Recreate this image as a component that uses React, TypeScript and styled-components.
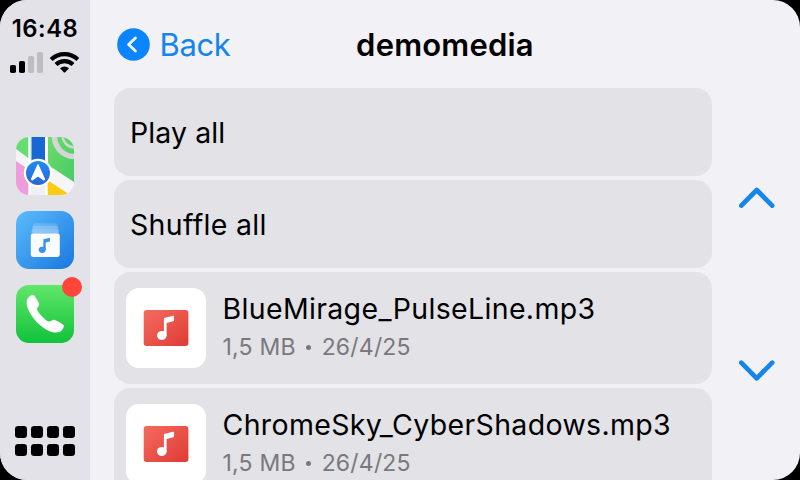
import React from "react";
import styled, { createGlobalStyle } from "styled-components";

const GlobalStyle = createGlobalStyle`
  * { box-sizing: border-box; }
  body { margin: 0; background: #000; overflow: hidden; }
`;

const Screen = styled.div`
  display: flex;
  width: 800px;
  height: 480px;
  overflow: hidden;
  border-radius: 27px;
  background: #f1f1f6;
  color: #000;
  font-family: "Inter", sans-serif;
`;

const Sidebar = styled.aside`
  display: flex;
  flex-direction: column;
  align-items: center;
  width: 90px;
  height: 480px;
  padding-top: 15px;
  background: #e2e2e8;
`;

const Clock = styled.div`
  height: 28px;
  line-height: 28px;
  font-size: 23.8px;
  font-weight: 600;
  letter-spacing: 0.5px;
  white-space: nowrap;
`;

const StatusIcons = styled.svg`
  display: block;
  width: 90px;
  height: 30px;
`;

const Dock = styled.nav`
  display: flex;
  flex-direction: column;
  gap: 16px;
  margin-top: 64px;
`;

const AppButton = styled.div`
  position: relative;
  width: 58px;
  height: 58px;
`;

const AppArt = styled.svg`
  display: block;
  width: 58px;
  height: 58px;
  border-radius: 13px;
`;

const Badge = styled.span`
  position: absolute;
  top: -8px;
  right: -8px;
  width: 20px;
  height: 20px;
  border-radius: 50%;
  background: #ff463b;
`;

const LauncherGrid = styled.div`
  display: grid;
  grid-template-columns: repeat(4, 12px);
  grid-auto-rows: 12px;
  gap: 6px 4px;
  margin: auto 0 24px;
`;

const Dot = styled.span`
  border-radius: 3.2px;
  background: #000;
`;

const Main = styled.main`
  display: flex;
  flex-direction: column;
  width: 710px;
  height: 480px;
  padding-left: 24px;
`;

const Header = styled.header`
  display: grid;
  grid-template-columns: 1fr auto 1fr;
  align-items: center;
  flex: none;
  width: 662px;
  height: 88px;
`;

const BackButton = styled.div`
  display: flex;
  align-items: center;
  gap: 9.5px;
  padding-left: 3px;
  color: #1485ec;
  font-size: 31px;
  line-height: 38px;
  letter-spacing: -0.4px;
`;

const BackLabel = styled.span`
  padding-top: 2px;
`;

const Title = styled.h1`
  margin: 0;
  padding-top: 2px;
  font-size: 31px;
  line-height: 38px;
  font-weight: 600;
  letter-spacing: 0.2px;
`;

const Content = styled.div`
  display: flex;
  gap: 27px;
`;

const List = styled.div`
  display: flex;
  flex-direction: column;
  gap: 4px;
  width: 598px;
  height: 392px;
  overflow: hidden;
`;

const Row = styled.div<{ $tall?: boolean }>`
  display: flex;
  flex: none;
  align-items: center;
  gap: 16.5px;
  height: ${(p) => (p.$tall ? 112 : 88)}px;
  padding: ${(p) => (p.$tall ? "0 0 0 12px" : "2px 0 0 16px")};
  border-radius: 16px;
  background: #e2e2e7;
`;

const Label = styled.div<{ $tracking?: number }>`
  font-size: 28.5px;
  line-height: 38px;
  letter-spacing: ${(p) => p.$tracking ?? 0}px;
  white-space: nowrap;
`;

const TrackText = styled.div`
  padding-bottom: 5px;
`;

const Meta = styled.div`
  display: flex;
  align-items: center;
  color: #79797d;
  font-size: 23px;
  line-height: 30px;
  letter-spacing: 0.2px;
  margin-top: 4px;
  white-space: nowrap;
`;

const Separator = styled.span`
  width: 5px;
  height: 5px;
  margin: 2px 11px 0 10px;
  border-radius: 50%;
  background: #79797d;
`;

const Artwork = styled.svg`
  display: block;
  flex: none;
  width: 80px;
  height: 80px;
  border-radius: 13px;
  background: #fff;
`;

const Pager = styled.div`
  display: flex;
  flex-direction: column;
  gap: 149px;
  padding-top: 98px;
`;

const Chevron = styled.svg`
  display: block;
  width: 36px;
  height: 24px;
`;

const MapsIcon = () => (
  <AppArt viewBox="0 0 58 58">
    <defs>
      <linearGradient id="mapGreen" x1="0" y1="0" x2="1" y2="1">
        <stop offset="0" stopColor="#6ddc68" />
        <stop offset="1" stopColor="#47cb67" />
      </linearGradient>
      <linearGradient id="mapPin" x1="0" y1="0" x2="0" y2="1">
        <stop offset="0" stopColor="#218af3" />
        <stop offset="1" stopColor="#2867d8" />
      </linearGradient>
    </defs>
    <rect width="58" height="58" fill="#f5f5f7" />
    <path d="M0 0H15V23L0 12Z" fill="#68dc72" />
    <path d="M32 0H58V45L32 28Z" fill="url(#mapGreen)" />
    <path d="M38.5 -1A20 20 0 0 0 58 19.5" fill="none" stroke="#d4d5d6" strokeWidth="5.5" />
    <path d="M46.5 -1A12 12 0 0 0 58 10.5" fill="none" stroke="#d4d5d6" strokeWidth="2.5" />
    <path d="M0 24L15 34V58H0Z" fill="#ee9ddb" />
    <path d="M30 42L54 58H30Z" fill="#fecb13" />
    <path d="M13 58V22H31V58Z" fill="#edf0f5" />
    <path d="M13.5 0V58M30.5 0V58" stroke="#fff" strokeWidth="2.4" />
    <rect x="15.5" width="13.5" height="32" fill="#1768d2" />
    <circle cx="22" cy="36" r="14.2" fill="#fff" />
    <circle cx="22" cy="36" r="12" fill="url(#mapPin)" />
    <path d="M22 27.5L28.6 42Q28.7 43.6 27.2 42.8L22 39L16.8 42.8Q15.3 43.6 15.4 42Z" fill="#fff" stroke="#fff" strokeWidth="1" strokeLinejoin="round" />
  </AppArt>
);

const MusicIcon = () => (
  <AppArt viewBox="0 0 58 58">
    <defs>
      <linearGradient id="musicBlue" x1="0" y1="0" x2="1" y2="1">
        <stop offset="0" stopColor="#5cbcfc" />
        <stop offset="1" stopColor="#1877df" />
      </linearGradient>
    </defs>
    <rect width="58" height="58" fill="url(#musicBlue)" />
    <rect x="17" y="12.2" width="24.5" height="6" rx="1.8" fill="#fff" opacity=".17" />
    <rect x="16" y="15" width="26.5" height="7" rx="1.8" fill="#fff" opacity=".2" />
    <rect x="15.5" y="18.2" width="27.5" height="7" rx="1.8" fill="#fff" opacity=".25" />
    <rect x="14.8" y="22.5" width="29" height="23.4" rx="2.3" fill="#fafcff" />
    <path d="M27.4 28.2L33.9 26.7V30.4L29.7 31.4V38.8H27.2Z" fill="#3894ed" />
    <ellipse cx="26.2" cy="38.8" rx="3.5" ry="3.1" fill="#3894ed" />
  </AppArt>
);

const PhoneIcon = () => (
  <AppArt viewBox="0 0 58 58">
    <defs>
      <linearGradient id="phoneGreen" x1="0" y1="0" x2="0" y2="1">
        <stop offset="0" stopColor="#62e66a" />
        <stop offset="1" stopColor="#10c23b" />
      </linearGradient>
    </defs>
    <rect width="58" height="58" fill="url(#phoneGreen)" />
    <path
      d="M11.6 13.4C12.8 11.6 15.8 9.6 17.4 10.1C19 10.7 22.7 17.3 23.2 19C23.7 20.8 20.7 22.6 21 24.3C21.6 27.4 29.2 35.3 32.3 36.4C34.2 37.1 36.2 34.8 37.8 34.7C39.6 34.7 47 38.9 47.8 40.5C48.5 42.2 45.6 46.1 44 46.8C37.8 49.4 29.6 45.2 23.1 39.2C15.9 32.6 7.9 20.4 11.6 13.4Z"
      fill="#fff"
    />
  </AppArt>
);

const TrackArtwork = () => (
  <Artwork viewBox="0 0 80 80">
    <defs>
      <linearGradient id="trackRed" x1="0" y1="0" x2="1" y2="1">
        <stop offset="0" stopColor="#f56b5f" />
        <stop offset="1" stopColor="#df3b35" />
      </linearGradient>
    </defs>
    <rect x="17.7" y="22" width="44.7" height="36" rx="3" fill="url(#trackRed)" />
    <path d="M37.9 30.8Q37.9 29.9 38.9 29.7L47.2 27.8Q48 27.6 48 28.4V33L40.6 35V48H37.9Z" fill="#fff" />
    <ellipse cx="35.8" cy="47.5" rx="4.8" ry="4.5" fill="#fff" />
  </Artwork>
);

const tracks = [
  { name: "BlueMirage_PulseLine.mp3", size: "1,5 MB", date: "26/4/25" },
  { name: "ChromeSky_CyberShadows.mp3", size: "1,5 MB", date: "26/4/25" },
];

export default function App() {
  return (
    <>
      <GlobalStyle />
      <Screen>
        <Sidebar>
          <Clock>16:48</Clock>
          <StatusIcons viewBox="0 43 90 30">
            <rect x="10" y="65" width="6" height="8" rx="1.8" />
            <rect x="19" y="61" width="6" height="12" rx="1.8" />
            <rect x="28" y="56" width="6" height="17" rx="1.8" fill="#bdbdc2" />
            <rect x="37" y="52" width="6" height="21" rx="1.8" fill="#bdbdc2" />
            <g fill="none" stroke="#000" strokeWidth="4.2">
              <path d="M51.2 59.4A19.3 19.3 0 0 1 77.8 59.4" />
              <path d="M56 64.6A12.2 12.2 0 0 1 73 64.6" />
            </g>
            <path d="M60 68.3Q64.5 64.5 69 68.3L65.2 72.2Q64.5 72.9 63.8 72.2Z" />
          </StatusIcons>
          <Dock>
            <AppButton><MapsIcon /></AppButton>
            <AppButton><MusicIcon /></AppButton>
            <AppButton><PhoneIcon /><Badge /></AppButton>
          </Dock>
          <LauncherGrid>
            {Array.from({ length: 8 }, (_, i) => <Dot key={i} />)}
          </LauncherGrid>
        </Sidebar>
        <Main>
          <Header>
            <BackButton>
              <svg width="33" height="33" viewBox="0 0 33 33">
                <circle cx="16.5" cy="16.5" r="16.3" fill="#0a84ff" />
                <path d="M18.4 10L11.6 16.5L18.4 23" fill="none" stroke="#f1f5fb" strokeWidth="2.9" strokeLinecap="round" strokeLinejoin="round" />
              </svg>
              <BackLabel>Back</BackLabel>
            </BackButton>
            <Title>demomedia</Title>
          </Header>
          <Content>
            <List>
              <Row><Label $tracking={0.1}>Play all</Label></Row>
              <Row><Label $tracking={0.3}>Shuffle all</Label></Row>
              {tracks.map((t) => (
                <Row $tall key={t.name}>
                  <TrackArtwork />
                  <TrackText>
                    <Label $tracking={0.34}>{t.name}</Label>
                    <Meta>
                      {t.size}
                      <Separator />
                      {t.date}
                    </Meta>
                  </TrackText>
                </Row>
              ))}
            </List>
            <Pager>
              <Chevron viewBox="0 0 36 24" fill="none" stroke="#1485ec" strokeWidth="4.7" strokeLinecap="round" strokeLinejoin="round">
                <path d="M2.3 19.6L17.7 4L33.2 19.6" />
              </Chevron>
              <Chevron viewBox="0 0 36 24" fill="none" stroke="#1485ec" strokeWidth="4.7" strokeLinecap="round" strokeLinejoin="round">
                <path d="M2.3 3.7L17.7 19.3L33.2 3.7" />
              </Chevron>
            </Pager>
          </Content>
        </Main>
      </Screen>
    </>
  );
}
